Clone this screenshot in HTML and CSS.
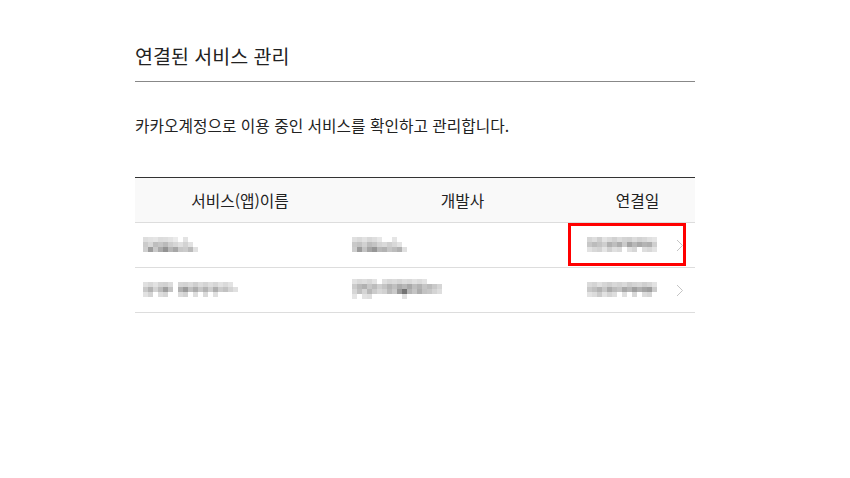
FILE: index.html
```html
<!DOCTYPE html>
<html lang="ko">
<head>
    <meta charset="UTF-8">
    <meta name="viewport" content="width=device-width, initial-scale=1.0">
    <title>연결된 서비스 관리</title>
    <link rel="stylesheet" href="styles.css">
</head>
<body>
    <div class="page">
        <h2 class="title">연결된 서비스 관리</h2>
        <p class="desc">카카오계정으로 이용 중인 서비스를 확인하고 관리합니다.</p>

        <table class="svc-table">
            <colgroup>
                <col class="c-name">
                <col class="c-dev">
                <col class="c-date">
            </colgroup>
            <thead>
                <tr>
                    <th>서비스(앱)이름</th>
                    <th>개발사</th>
                    <th>연결일</th>
                </tr>
            </thead>
            <tbody>
                <tr>
                    <td class="name">
                        <!-- blurred service name -->
                        <svg class="mosaic" width="55" height="15" viewBox="0 0 55 15">
                            <rect x="0" y="0" fill="#ececec"/><rect x="5" y="0" fill="#f0f0f0"/><rect x="10" y="0" fill="#f4f4f4"/><rect x="15" y="0" fill="#eaeaea"/><rect x="20" y="0" fill="#ececec"/><rect x="25" y="0" fill="#f2f2f2"/><rect x="30" y="0" fill="#fafafa"/><rect x="40" y="0" fill="#f2f2f2"/>
                            <rect x="0" y="5" fill="#d8d8d8"/><rect x="5" y="5" fill="#e6e6e6"/><rect x="10" y="5" fill="#cacaca"/><rect x="15" y="5" fill="#d2d2d2"/><rect x="20" y="5" fill="#c6c6c6"/><rect x="25" y="5" fill="#dadada"/><rect x="30" y="5" fill="#e4e4e4"/><rect x="35" y="5" fill="#eeeeee"/><rect x="40" y="5" fill="#e0e0e0"/><rect x="45" y="5" fill="#f0f0f0"/>
                            <rect x="0" y="10" fill="#dcdcdc"/><rect x="5" y="10" fill="#a8a8a8"/><rect x="10" y="10" fill="#d6d6d6"/><rect x="15" y="10" fill="#b6b6b6"/><rect x="20" y="10" fill="#9c9c9c"/><rect x="25" y="10" fill="#c2c2c2"/><rect x="30" y="10" fill="#b2b2b2"/><rect x="35" y="10" fill="#d4d4d4"/><rect x="40" y="10" fill="#d8d8d8"/><rect x="45" y="10" fill="#c6c6c6"/><rect x="50" y="10" fill="#efefef"/>
                        </svg>
                    </td>
                    <td class="dev">
                        <svg class="mosaic" width="55" height="15" viewBox="0 0 55 15">
                            <rect x="0" y="0" fill="#eeeeee"/><rect x="5" y="0" fill="#e8e8e8"/><rect x="10" y="0" fill="#f0f0f0"/><rect x="15" y="0" fill="#e6e6e6"/><rect x="20" y="0" fill="#ececec"/><rect x="25" y="0" fill="#f6f6f6"/><rect x="40" y="0" fill="#f4f4f4"/>
                            <rect x="0" y="5" fill="#d6d6d6"/><rect x="5" y="5" fill="#cfcfcf"/><rect x="10" y="5" fill="#dedede"/><rect x="15" y="5" fill="#c8c8c8"/><rect x="20" y="5" fill="#d0d0d0"/><rect x="25" y="5" fill="#e2e2e2"/><rect x="30" y="5" fill="#e8e8e8"/><rect x="35" y="5" fill="#dcdcdc"/><rect x="40" y="5" fill="#e6e6e6"/><rect x="45" y="5" fill="#f2f2f2"/>
                            <rect x="0" y="10" fill="#dadada"/><rect x="5" y="10" fill="#a6a6a6"/><rect x="10" y="10" fill="#cfcfcf"/><rect x="15" y="10" fill="#b0b0b0"/><rect x="20" y="10" fill="#a0a0a0"/><rect x="25" y="10" fill="#c4c4c4"/><rect x="30" y="10" fill="#bdbdbd"/><rect x="35" y="10" fill="#d2d2d2"/><rect x="40" y="10" fill="#c8c8c8"/><rect x="45" y="10" fill="#bcbcbc"/><rect x="50" y="10" fill="#eeeeee"/>
                        </svg>
                    </td>
                    <td class="date">
                        <div class="date-cell">
                            <svg class="mosaic" width="70" height="15" viewBox="0 0 70 15">
                                <rect x="0" y="0" fill="#e4e4e4"/><rect x="5" y="0" fill="#ececec"/><rect x="10" y="0" fill="#dcdcdc"/><rect x="15" y="0" fill="#f2f2f2"/><rect x="20" y="0" fill="#e8e8e8"/><rect x="25" y="0" fill="#dedede"/><rect x="30" y="0" fill="#eaeaea"/><rect x="35" y="0" fill="#e2e2e2"/><rect x="40" y="0" fill="#dedede"/><rect x="45" y="0" fill="#eaeaea"/><rect x="50" y="0" fill="#e0e0e0"/><rect x="55" y="0" fill="#e6e6e6"/><rect x="60" y="0" fill="#eeeeee"/><rect x="65" y="0" fill="#f4f4f4"/>
                                <rect x="0" y="5" fill="#d4d4d4"/><rect x="5" y="5" fill="#c8c8c8"/><rect x="10" y="5" fill="#d0d0d0"/><rect x="15" y="5" fill="#dcdcdc"/><rect x="20" y="5" fill="#bcbcbc"/><rect x="25" y="5" fill="#cacaca"/><rect x="30" y="5" fill="#b8b8b8"/><rect x="35" y="5" fill="#d8d8d8"/><rect x="40" y="5" fill="#aeaeae"/><rect x="45" y="5" fill="#c4c4c4"/><rect x="50" y="5" fill="#b4b4b4"/><rect x="55" y="5" fill="#c0c0c0"/><rect x="60" y="5" fill="#bababa"/><rect x="65" y="5" fill="#dcdcdc"/>
                                <rect x="0" y="10" fill="#f0f0f0"/><rect x="5" y="10" fill="#e6e6e6"/><rect x="10" y="10" fill="#e0e0e0"/><rect x="15" y="10" fill="#f4f4f4"/><rect x="20" y="10" fill="#dedede"/><rect x="25" y="10" fill="#eeeeee"/><rect x="30" y="10" fill="#e8e8e8"/><rect x="40" y="10" fill="#eeeeee"/><rect x="45" y="10" fill="#e4e4e4"/><rect x="55" y="10" fill="#ececec"/><rect x="60" y="10" fill="#e6e6e6"/><rect x="65" y="10" fill="#f2f2f2"/>
                            </svg>
                            <svg class="chevron" width="8" height="13" viewBox="0 0 8 13">
                                <polyline points="1,1 6.5,6.5 1,12"/>
                            </svg>
                        </div>
                        <span class="mark"></span>
                    </td>
                </tr>
                <tr>
                    <td class="name">
                        <svg class="mosaic" width="95" height="15" viewBox="0 0 95 15">
                            <rect x="0" y="0" fill="#eeeeee"/><rect x="5" y="0" fill="#e6e6e6"/><rect x="10" y="0" fill="#f0f0f0"/><rect x="15" y="0" fill="#e2e2e2"/><rect x="20" y="0" fill="#dedede"/><rect x="25" y="0" fill="#eaeaea"/><rect x="35" y="0" fill="#e4e4e4"/><rect x="40" y="0" fill="#e0e0e0"/><rect x="45" y="0" fill="#e8e8e8"/><rect x="50" y="0" fill="#dcdcdc"/><rect x="55" y="0" fill="#eaeaea"/><rect x="60" y="0" fill="#e2e2e2"/><rect x="65" y="0" fill="#ececec"/><rect x="70" y="0" fill="#e4e4e4"/><rect x="75" y="0" fill="#f0f0f0"/><rect x="80" y="0" fill="#e8e8e8"/><rect x="85" y="0" fill="#f2f2f2"/>
                            <rect x="0" y="5" fill="#d6d6d6"/><rect x="5" y="5" fill="#bebebe"/><rect x="10" y="5" fill="#e0e0e0"/><rect x="15" y="5" fill="#c8c8c8"/><rect x="20" y="5" fill="#aaaaaa"/><rect x="25" y="5" fill="#d0d0d0"/><rect x="35" y="5" fill="#bcbcbc"/><rect x="40" y="5" fill="#a6a6a6"/><rect x="45" y="5" fill="#cccccc"/><rect x="50" y="5" fill="#b8b8b8"/><rect x="55" y="5" fill="#d4d4d4"/><rect x="60" y="5" fill="#c0c0c0"/><rect x="65" y="5" fill="#dadada"/><rect x="70" y="5" fill="#bababa"/><rect x="75" y="5" fill="#d8d8d8"/><rect x="80" y="5" fill="#cecece"/><rect x="85" y="5" fill="#e2e2e2"/><rect x="90" y="5" fill="#eeeeee"/>
                            <rect x="0" y="10" fill="#f0f0f0"/><rect x="5" y="10" fill="#e2e2e2"/><rect x="15" y="10" fill="#ececec"/><rect x="20" y="10" fill="#e4e4e4"/><rect x="35" y="10" fill="#eaeaea"/><rect x="40" y="10" fill="#e0e0e0"/><rect x="50" y="10" fill="#ececec"/><rect x="60" y="10" fill="#e8e8e8"/><rect x="70" y="10" fill="#eeeeee"/>
                        </svg>
                    </td>
                    <td class="dev">
                        <svg class="mosaic" width="90" height="20" viewBox="0 0 90 20">
                            <rect x="0" y="0" fill="#f0f0f0"/><rect x="5" y="0" fill="#e8e8e8"/><rect x="10" y="0" fill="#ececec"/><rect x="15" y="0" fill="#e6e6e6"/><rect x="20" y="0" fill="#f2f2f2"/><rect x="30" y="0" fill="#eeeeee"/><rect x="35" y="0" fill="#e6e6e6"/><rect x="40" y="0" fill="#eaeaea"/><rect x="45" y="0" fill="#e4e4e4"/><rect x="50" y="0" fill="#ececec"/><rect x="55" y="0" fill="#e8e8e8"/><rect x="60" y="0" fill="#f0f0f0"/><rect x="65" y="0" fill="#eaeaea"/><rect x="70" y="0" fill="#f2f2f2"/>
                            <rect x="0" y="5" fill="#d8d8d8"/><rect x="5" y="5" fill="#c6c6c6"/><rect x="10" y="5" fill="#bcbcbc"/><rect x="15" y="5" fill="#d4d4d4"/><rect x="20" y="5" fill="#c8c8c8"/><rect x="25" y="5" fill="#dcdcdc"/><rect x="30" y="5" fill="#d0d0d0"/><rect x="35" y="5" fill="#c0c0c0"/><rect x="40" y="5" fill="#cccccc"/><rect x="45" y="5" fill="#b8b8b8"/><rect x="50" y="5" fill="#c4c4c4"/><rect x="55" y="5" fill="#b4b4b4"/><rect x="60" y="5" fill="#cacaca"/><rect x="65" y="5" fill="#bebebe"/><rect x="70" y="5" fill="#d2d2d2"/><rect x="75" y="5" fill="#c8c8c8"/><rect x="80" y="5" fill="#d6d6d6"/><rect x="85" y="5" fill="#e4e4e4"/>
                            <rect x="0" y="10" fill="#e4e4e4"/><rect x="5" y="10" fill="#cccccc"/><rect x="10" y="10" fill="#e2e2e2"/><rect x="15" y="10" fill="#c4c4c4"/><rect x="20" y="10" fill="#d8d8d8"/><rect x="25" y="10" fill="#e6e6e6"/><rect x="30" y="10" fill="#dedede"/><rect x="35" y="10" fill="#c6c6c6"/><rect x="40" y="10" fill="#d6d6d6"/><rect x="45" y="10" fill="#a4a4a4"/><rect x="50" y="10" fill="#7a7a7a"/><rect x="55" y="10" fill="#c0c0c0"/><rect x="60" y="10" fill="#d0d0d0"/><rect x="65" y="10" fill="#b8b8b8"/><rect x="70" y="10" fill="#cecece"/><rect x="75" y="10" fill="#d4d4d4"/><rect x="80" y="10" fill="#e2e2e2"/><rect x="85" y="10" fill="#ececec"/>
                            <rect x="0" y="15" fill="#f4f4f4"/><rect x="10" y="15" fill="#f0f0f0"/><rect x="15" y="15" fill="#ececec"/><rect x="50" y="15" fill="#eeeeee"/>
                        </svg>
                    </td>
                    <td class="date">
                        <div class="date-cell">
                            <svg class="mosaic" width="70" height="15" viewBox="0 0 70 15">
                                <rect x="0" y="0" fill="#e8e8e8"/><rect x="5" y="0" fill="#e2e2e2"/><rect x="10" y="0" fill="#eeeeee"/><rect x="15" y="0" fill="#e4e4e4"/><rect x="20" y="0" fill="#dcdcdc"/><rect x="25" y="0" fill="#e6e6e6"/><rect x="30" y="0" fill="#e0e0e0"/><rect x="35" y="0" fill="#e8e8e8"/><rect x="40" y="0" fill="#dadada"/><rect x="45" y="0" fill="#e2e2e2"/><rect x="50" y="0" fill="#e6e6e6"/><rect x="55" y="0" fill="#dcdcdc"/><rect x="60" y="0" fill="#e4e4e4"/><rect x="65" y="0" fill="#f0f0f0"/>
                                <rect x="0" y="5" fill="#d6d6d6"/><rect x="5" y="5" fill="#cccccc"/><rect x="10" y="5" fill="#bebebe"/><rect x="15" y="5" fill="#d4d4d4"/><rect x="20" y="5" fill="#b6b6b6"/><rect x="25" y="5" fill="#c8c8c8"/><rect x="30" y="5" fill="#d0d0d0"/><rect x="35" y="5" fill="#b4b4b4"/><rect x="40" y="5" fill="#c2c2c2"/><rect x="45" y="5" fill="#aaaaaa"/><rect x="50" y="5" fill="#bcbcbc"/><rect x="55" y="5" fill="#b0b0b0"/><rect x="60" y="5" fill="#a8a8a8"/><rect x="65" y="5" fill="#d8d8d8"/>
                                <rect x="0" y="10" fill="#f2f2f2"/><rect x="5" y="10" fill="#eaeaea"/><rect x="10" y="10" fill="#d8d8d8"/><rect x="15" y="10" fill="#f0f0f0"/><rect x="20" y="10" fill="#e2e2e2"/><rect x="25" y="10" fill="#ececec"/><rect x="35" y="10" fill="#eeeeee"/><rect x="45" y="10" fill="#e6e6e6"/><rect x="55" y="10" fill="#eaeaea"/><rect x="60" y="10" fill="#e4e4e4"/>
                            </svg>
                            <svg class="chevron" width="8" height="13" viewBox="0 0 8 13">
                                <polyline points="1,1 6.5,6.5 1,12"/>
                            </svg>
                        </div>
                    </td>
                </tr>
            </tbody>
        </table>
    </div>
</body>
</html>
```

FILE: styles.css
```css
body {
    margin: 0;
    padding: 0;
    font-family: "Noto Sans CJK KR", "Noto Sans", sans-serif;
    color: #222;
    background: #fff;
}

.page {
    width: 560px;
    margin-left: 135px;
    padding-top: 42px;
}

.title {
    margin: 0;
    padding-bottom: 12px;
    font-size: 19.5px;
    font-weight: 400;
    line-height: 27px;
    border-bottom: 1px solid #888; /* grey rule under the title */
}

.desc {
    margin: 33px 0 40px;
    font-size: 15.75px;
    line-height: 22px;
}

.svc-table {
    width: 560px;
    border-collapse: collapse;
    border-top: 1px solid #333;
    table-layout: fixed;
}

.c-name { width: 210px; }
.c-dev { width: 235px; }
.c-date { width: 115px; }

.svc-table th {
    height: 44px;
    padding: 0;
    background-color: #f9f9f9;
    font-size: 15.75px;
    font-weight: 400;
    text-align: center;
    border-bottom: 1px solid #ddd;
}

.svc-table td {
    height: 44px;
    padding: 0;
    vertical-align: middle;
    border-bottom: 1px solid #ddd;
}

.svc-table td.name { padding-left: 8px; }
.svc-table td.dev { padding-left: 7px; }

.svc-table td.date {
    position: relative; /* for the highlight box */
}

.mosaic {
    display: block;
    margin-top: -2px;
    shape-rendering: crispEdges;
    filter: brightness(0.94); /* pixelated text reads a bit darker */
}

.mosaic rect {
    width: 5px;
    height: 5px;
}

.date-cell {
    display: flex;
    justify-content: flex-end;
    align-items: center;
    gap: 19px;
    padding-right: 11px;
}

.chevron polyline {
    fill: none;
    stroke: #c4c4c4;
    stroke-width: 1;
}

/* red highlight drawn over the first date cell */
.mark {
    position: absolute;
    left: -12px;
    right: 9px;
    top: 0;
    bottom: 1px;
    border: 3px solid #f00;
    box-sizing: border-box;
}
```
